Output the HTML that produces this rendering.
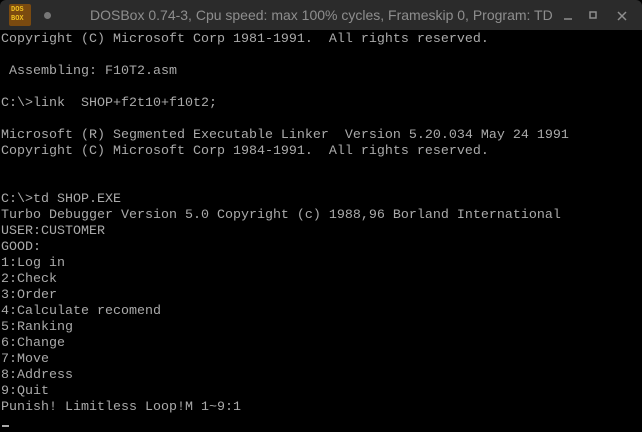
<!DOCTYPE html>
<html><head><style>
html,body{margin:0;padding:0;width:642px;height:432px;overflow:hidden;background:#000;}
#tb{position:absolute;left:0;top:0;width:642px;height:30px;background:#2b2b2b;border-radius:6px 6px 0 0;}
#title{position:absolute;left:90px;top:7px;font:14px "Liberation Sans",sans-serif;color:#8e8e8e;white-space:nowrap;}
#icon{position:absolute;left:9px;top:4px;width:22px;height:22px;background:#7a4a10;border-radius:2px;}
#icon span{position:absolute;left:2px;font:bold 7px "Liberation Mono",monospace;color:#f0c020;line-height:8px;}
#dot{position:absolute;left:44px;top:12px;width:7px;height:7px;border-radius:50%;background:#777;}
#term{position:absolute;left:1px;top:32px;width:641px;height:400px;background:#000;}
pre{margin:0;font:13.33px/16px "Liberation Mono",monospace;color:#aaa;}
#cur{position:absolute;left:2px;top:425px;width:7px;height:2px;background:#aaa;}
</style></head><body>
<div id="tb">
<div id="icon"><span style="top:2px">DOS</span><span style="top:11px">BOX</span></div>
<div id="dot"></div>
<div id="title">DOSBox 0.74-3, Cpu speed: max 100% cycles, Frameskip 0, Program: TD</div>
<svg style="position:absolute;left:560px;top:8px" width="80" height="16">
<line x1="4" y1="11" x2="12" y2="11" stroke="#8e8e8e" stroke-width="1.5"/>
<rect x="30" y="4" width="6" height="6" fill="none" stroke="#8e8e8e" stroke-width="1.5"/>
<path d="M58 4 L66 12 M66 4 L58 12" stroke="#8e8e8e" stroke-width="1.5"/>
</svg>
</div>
<div id="term"><pre>Copyright (C) Microsoft Corp 1981-1991.  All rights reserved.

 Assembling: F10T2.asm

C:\&gt;link  SHOP+f2t10+f10t2;

Microsoft (R) Segmented Executable Linker  Version 5.20.034 May 24 1991
Copyright (C) Microsoft Corp 1984-1991.  All rights reserved.


C:\&gt;td SHOP.EXE
Turbo Debugger Version 5.0 Copyright (c) 1988,96 Borland International
USER:CUSTOMER
GOOD:
1:Log in
2:Check
3:Order
4:Calculate recomend
5:Ranking
6:Change
7:Move
8:Address
9:Quit
Punish! Limitless Loop!M 1~9:1</pre></div>
<div id="cur"></div>
</body></html>
